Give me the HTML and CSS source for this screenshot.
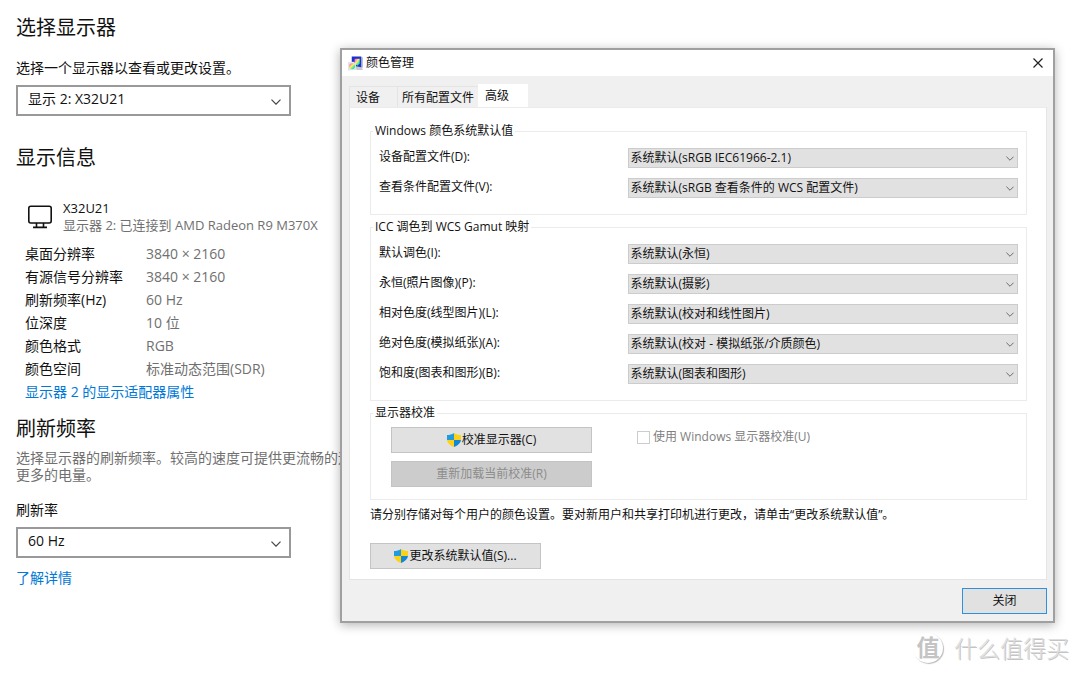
FILE: index.html
```html
<!DOCTYPE html>
<html lang="zh-CN">
<head>
<meta charset="utf-8">
<title>颜色管理</title>
<link rel="stylesheet" href="styles.css">
</head>
<body>
<svg class="defs" aria-hidden="true">
  <symbol id="chevron" viewBox="0 0 10 6"><path d="M.5.7 5 5.2 9.5.7" fill="none" stroke="currentColor" stroke-width="1.200"/></symbol>
  <symbol id="shield" viewBox="0 0 14 14">
    <path d="M7 0C5 1.400 2.500 2 0 2V7H7Z" fill="#1f9be0"/>
    <path d="M7 0C9 1.400 11.500 2 14 2V7H7Z" fill="#fcd116"/>
    <path d="M0 7C.3 10 3 12.500 7 14V7Z" fill="#fcd116"/>
    <path d="M14 7C13.700 10 11 12.500 7 14V7Z" fill="#1487d4"/>
  </symbol>
</svg>

<main class="settings">
  <h2 class="heading">选择显示器</h2>
  <label class="field-label" for="display">选择一个显示器以查看或更改设置。</label>
  <div class="picker picker-large">
    <select id="display"><option>显示 2: X32U21</option></select>
    <svg class="chevron"><use href="#chevron"/></svg>
  </div>

  <h2 class="heading info-heading">显示信息</h2>
  <div class="device">
    <svg class="monitor" viewBox="0 0 24 24" fill="none" stroke="#111" stroke-width="1.600">
      <rect x=".8" y="1.200" width="22.400" height="16.800" rx="2"/>
      <path d="M8.500 18V22M15.500 18V22M5 22.400H19"/>
    </svg>
    <div>
      <div>X32U21</div>
      <div class="muted">显示器 2: 已连接到 AMD Radeon R9 M370X</div>
    </div>
  </div>
  <dl class="specs">
    <dt>桌面分辨率</dt><dd>3840 × 2160</dd>
    <dt>有源信号分辨率</dt><dd>3840 × 2160</dd>
    <dt>刷新频率(Hz)</dt><dd>60 Hz</dd>
    <dt>位深度</dt><dd>10 位</dd>
    <dt>颜色格式</dt><dd>RGB</dd>
    <dt>颜色空间</dt><dd>标准动态范围(SDR)</dd>
  </dl>
  <a class="link adapter-link" href="#">显示器 2 的显示适配器属性</a>

  <h2 class="heading rate-heading">刷新频率</h2>
  <p class="description muted">选择显示器的刷新频率。较高的速度可提供更流畅的运<br>更多的电量。</p>
  <label class="field-label" for="rate">刷新率</label>
  <div class="picker picker-large">
    <select id="rate"><option>60 Hz</option></select>
    <svg class="chevron"><use href="#chevron"/></svg>
  </div>
  <a class="link more-link" href="#">了解详情</a>
</main>

<section class="dialog" role="dialog" aria-labelledby="dialog-title">
  <header class="titlebar">
    <svg class="app-icon" viewBox="0 0 16 16">
      <defs>
        <linearGradient id="hue" x1="0" y1="0" x2="1" y2="1">
          <stop offset="0" stop-color="#f040e0"/><stop offset=".25" stop-color="#ffa0a0"/>
          <stop offset=".45" stop-color="#f8f05a"/><stop offset=".7" stop-color="#3ce8a0"/>
          <stop offset="1" stop-color="#38c8ff"/>
        </linearGradient>
      </defs>
      <path d="M8 11h6l2 4H9Z" fill="#c9c9c9"/>
      <path d="M4 .500 14 .500V12L4 10Z" fill="#1c2fd0"/>
      <path d="M14 .500 15.600 1.500V12.500L14 12Z" fill="#8f9ac4"/>
      <path d="M7 3H12.500V8L10 10.500 7 8Z" fill="url(#hue)"/>
      <path d="M0 6.500 6 6 8.500 8V15L0 15.500Z" fill="#e4e4e4"/>
      <circle cx="4.400" cy="11" r="3.200" fill="url(#hue)"/>
    </svg>
    <h1 class="dialog-title" id="dialog-title">颜色管理</h1>
    <button class="close" aria-label="关闭窗口">
      <svg viewBox="0 0 10 10"><path d="M.5.5 9.500 9.500M9.500.5.5 9.500" stroke="#222" stroke-width="1.200" fill="none"/></svg>
    </button>
  </header>

  <div class="dialog-body">
    <div class="tabs" role="tablist">
      <button class="tab" role="tab">设备</button>
      <button class="tab" role="tab">所有配置文件</button>
      <button class="tab tab-active" role="tab" aria-selected="true">高级</button>
    </div>

    <div class="panel" role="tabpanel">
      <fieldset class="group">
        <legend>Windows 颜色系统默认值</legend>
        <div class="rows">
          <label for="device-profile">设备配置文件(D):</label>
          <div class="picker"><select id="device-profile"><option>系统默认(sRGB IEC61966-2.1)</option></select><svg class="chevron"><use href="#chevron"/></svg></div>
          <label for="view-profile">查看条件配置文件(V):</label>
          <div class="picker"><select id="view-profile"><option>系统默认(sRGB 查看条件的 WCS 配置文件)</option></select><svg class="chevron"><use href="#chevron"/></svg></div>
        </div>
      </fieldset>

      <fieldset class="group">
        <legend>ICC 调色到 WCS Gamut 映射</legend>
        <div class="rows">
          <label for="intent-default">默认调色(I):</label>
          <div class="picker"><select id="intent-default"><option>系统默认(永恒)</option></select><svg class="chevron"><use href="#chevron"/></svg></div>
          <label for="intent-photo">永恒(照片图像)(P):</label>
          <div class="picker"><select id="intent-photo"><option>系统默认(摄影)</option></select><svg class="chevron"><use href="#chevron"/></svg></div>
          <label for="intent-relative">相对色度(线型图片)(L):</label>
          <div class="picker"><select id="intent-relative"><option>系统默认(校对和线性图片)</option></select><svg class="chevron"><use href="#chevron"/></svg></div>
          <label for="intent-absolute">绝对色度(模拟纸张)(A):</label>
          <div class="picker"><select id="intent-absolute"><option>系统默认(校对 - 模拟纸张/介质颜色)</option></select><svg class="chevron"><use href="#chevron"/></svg></div>
          <label for="intent-saturation">饱和度(图表和图形)(B):</label>
          <div class="picker"><select id="intent-saturation"><option>系统默认(图表和图形)</option></select><svg class="chevron"><use href="#chevron"/></svg></div>
        </div>
      </fieldset>

      <fieldset class="group">
        <legend>显示器校准</legend>
        <div class="calibration">
          <div class="calibration-actions">
            <button class="button"><svg class="shield"><use href="#shield"/></svg>校准显示器(C)</button>
            <button class="button" disabled>重新加载当前校准(R)</button>
          </div>
          <label class="check"><input type="checkbox" disabled>使用 Windows 显示器校准(U)</label>
        </div>
      </fieldset>

      <p class="note">请分别存储对每个用户的颜色设置。要对新用户和共享打印机进行更改，请单击“更改系统默认值”。</p>
      <button class="button change-defaults"><svg class="shield"><use href="#shield"/></svg>更改系统默认值(S)...</button>
    </div>

    <footer class="dialog-footer"><button class="button button-default">关闭</button></footer>
  </div>
</section>

<div class="watermark"><span class="watermark-badge">值</span>什么值得买</div>
</body>
</html>
```

FILE: styles.css
```css
* { box-sizing: border-box; }

body {
  position: relative;
  min-height: 100vh;
  margin: 0;
  overflow: hidden;
  background: #fff;
  color: #111;
  font-family: "Open Sans", "Noto Sans CJK SC", sans-serif;
  font-size: 14px;
}

button, select, input { margin: 0; font: inherit; color: inherit; }
h1, h2, p, dl, dd { margin: 0; font-weight: 400; }
.defs { position: absolute; width: 0; height: 0; }

.settings {
  display: flex;
  flex-direction: column;
  align-items: flex-start;
  padding: 14px 16px;
  white-space: nowrap;
}
.heading { font-size: 20px; line-height: 28px; }
.field-label { margin-top: 16px; line-height: 20px; }
.muted { color: #707070; }
.link { color: #0078d7; line-height: 23px; text-decoration: none; }

.picker { position: relative; display: flex; }
.picker select {
  width: 100%;
  height: 20px;
  padding: 0 20px 0 2px;
  border: 1px solid #ccc;
  border-radius: 0;
  background: #e1e1e1;
  line-height: 18px;
  appearance: none;
}
.chevron {
  position: absolute;
  top: 50%;
  right: 4px;
  width: 8px;
  height: 5px;
  margin-top: -2px;
  color: #666;
  pointer-events: none;
}
.picker-large { width: 275px; margin-top: 7px; }
.picker-large select {
  height: 31px;
  padding: 0 30px 4px 10px;
  border: 2px solid #999;
  background: #fff;
}
.picker-large .chevron { right: 10px; width: 10px; height: 6px; color: #444; }

.info-heading { margin-top: 28px; }
.device {
  display: flex;
  gap: 11px;
  margin: 28px 0 0 12px;
  font-size: 13px;
  line-height: 17px;
}
.monitor { width: 24px; height: 24px; margin-top: 5px; }
.specs {
  display: grid;
  grid-template-columns: 121px auto;
  margin: 8px 0 0 9px;
  line-height: 23px;
}
.specs dd { color: #707070; }
.adapter-link { margin-left: 9px; }
.rate-heading { margin-top: 12px; }
.description { margin-top: 6px; line-height: 17px; }
.description + .field-label { margin-top: 17px; }
.more-link { margin-top: 8px; }

.dialog {
  position: absolute;
  top: 48px;
  left: 340px;
  right: 25px;
  border: 2px solid #a0a0a0;
  background: #f0f0f0;
  box-shadow: 0 2px 10px rgba(0, 0, 0, .3);
  font-size: 12px;
  line-height: 16px;
}
.titlebar {
  display: flex;
  align-items: center;
  height: 26px;
  padding: 0 10px 0 6px;
  background: #fff;
}
.app-icon { width: 15px; height: 15px; }
.dialog-title { flex: 1; margin-left: 3px; font-size: 12px; }
.close { display: flex; padding: 0; border: 0; background: none; }
.close svg { width: 10px; height: 10px; }

.dialog-body { padding: 8px 6px 7px 7px; }
.tabs { display: flex; align-items: flex-end; }
.tab {
  height: 21px;
  padding: 2px 4px 0;
  border: 1px solid #e4e4e4;
  border-width: 1px 0 0 1px;
  background: #f0f0f0;
}
.tab:first-child { width: 48px; padding: 2px 6px 0; text-align: left; }
.tab-active {
  width: 50px;
  height: 23px;
  padding: 0 6px;
  border-color: #fff;
  background: #fff;
  text-align: left;
}
.panel {
  padding: 15px 19px 10px 20px;
  border: 1px solid #e4e4e4;
  border-top-color: #ebebeb;
  background: #fff;
}

.group {
  min-width: 0;
  margin: 0 0 4px;
  padding: 9px 8px 16px;
  border: 1px solid #ebebeb;
}
.group legend { margin-left: -6px; padding: 0 2px; line-height: 16px; }
.rows {
  display: grid;
  grid-template-columns: 7fr 11fr;
  row-gap: 10px;
}
.rows label { line-height: 18px; }

.calibration { display: flex; gap: 45px; margin: -3px 0 -4px 12px; }
.calibration-actions { display: grid; gap: 8px; width: 201px; }
.button {
  display: flex;
  align-items: center;
  justify-content: center;
  gap: 1px;
  height: 26px;
  padding: 0 8px;
  border: 1px solid #c4c4c4;
  background: #e1e1e1;
}
.button:disabled { background: #ccc; color: #8c8c8c; }
.shield { width: 14px; height: 14px; }
.check {
  display: flex;
  align-items: center;
  align-self: flex-start;
  gap: 3px;
  height: 20px;
  color: #808080;
}
.check input {
  width: 13px;
  height: 13px;
  border: 1px solid #ccc;
  background: #fff;
  appearance: none;
}
.note { margin-top: 7px; }
.change-defaults { width: 171px; margin-top: 20px; }
.dialog-footer { display: flex; justify-content: flex-end; margin-top: 8px; }
.button-default { width: 85px; border-color: #2f90e0; }

.watermark {
  position: absolute;
  right: 11px;
  bottom: 10px;
  display: flex;
  align-items: center;
  gap: 11px;
  color: #dedede;
  font-size: 23px;
  font-weight: 300;
  line-height: 32px;
  text-shadow: 1px 1px 0 #c4c4c4;
}
.watermark-badge {
  width: 30px;
  height: 30px;
  border-radius: 50%;
  background: #fff;
  box-shadow: 1px 1px 1px #bbb;
  color: #c4c4c4;
  font-size: 23px;
  font-weight: 700;
  line-height: 28px;
  text-align: center;
  text-shadow: none;
}
```
